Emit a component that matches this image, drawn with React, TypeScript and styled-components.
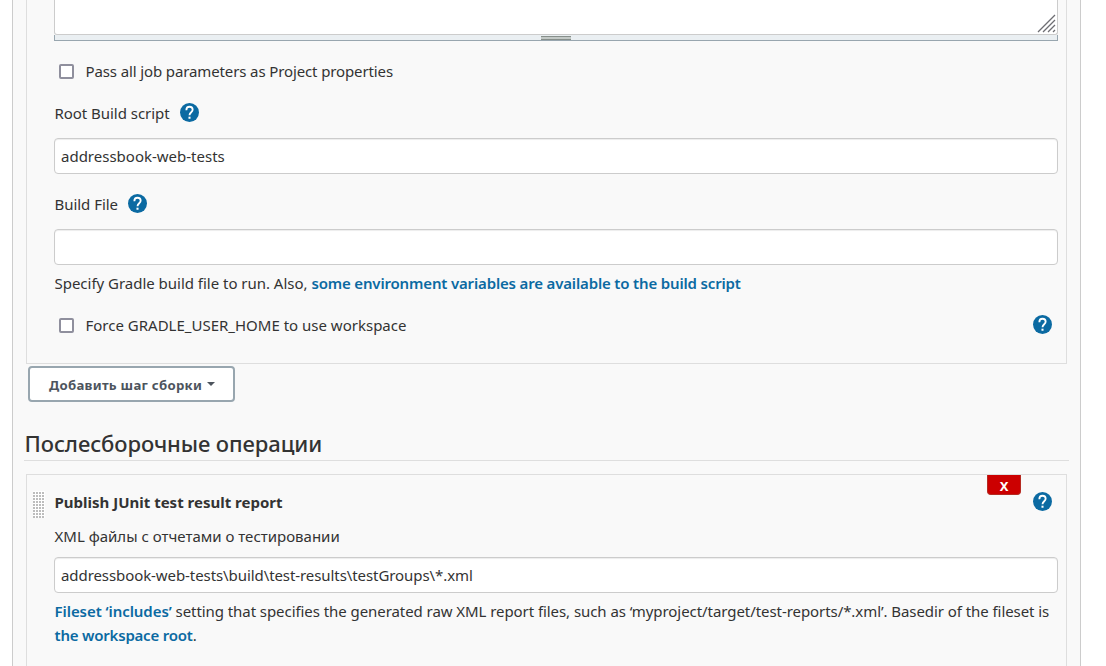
import React from "react";
import styled, { createGlobalStyle } from "styled-components";

const GlobalStyle = createGlobalStyle`
  *, *::before, *::after { box-sizing: border-box; }
  body {
    margin: 0;
    height: 666px;
    overflow: hidden;
    background: #fff;
    color: #333;
    font: 15px/24px "Noto Sans", "Open Sans", sans-serif;
  }
`;

const Page = styled.div`
  height: 666px;
  overflow: hidden;
  padding: 0 25px 0 12px;
`;

const Panel = styled.main`
  height: 666px;
  padding: 0 11px;
  background: #f9f9f9;
  border: solid #ccc;
  border-width: 0 1px;
`;

const Chunk = styled.section<{ $first?: boolean }>`
  position: relative;
  display: flex;
  flex-direction: column;
  margin: 0 2px;
  padding: 0 8px 0 27px;
  border: 1px solid #dedede;
  border-top-width: ${(p) => (p.$first ? 0 : 1)}px;
  border-bottom-width: ${(p) => (p.$first ? 1 : 0)}px;
  height: ${(p) => (p.$first ? "364px" : "192px")};
`;

const TextArea = styled.div`
  display: flex;
  align-items: flex-end;
  justify-content: flex-end;
  height: 35px;
  padding: 0 1px 1px;
  background: #fff;
  border: 1px solid #ccc;
  border-top: 0;
  border-radius: 0 0 3px 3px;
`;

const ResizeBar = styled.div`
  display: flex;
  justify-content: center;
  height: 6px;
  padding-top: 1px;
  background: #eaeff2;
  border: 1px solid #98a6af;
  border-top: 0;
`;

const ResizeGrip = styled.div`
  width: 30px;
  height: 4px;
  background: #c3c9c6;
  border: solid #878f8b;
  border-width: 1px 0;
`;

const Row = styled.div<{ $top: number; $indent?: number }>`
  display: flex;
  align-items: center;
  height: 24px;
  margin-top: ${(p) => p.$top}px;
  padding-left: ${(p) => p.$indent ?? 0.5}px;
`;

const Checkbox = styled.span`
  flex: none;
  width: 15px;
  height: 15px;
  margin-right: 11.5px;
  background: #fff;
  border: 2px solid #8f8f9d;
  border-radius: 2px;
`;

const Label = styled.span<{ $spacing?: number; $bold?: boolean }>`
  white-space: nowrap;
  letter-spacing: ${(p) => p.$spacing ?? 0}px;
  font-weight: ${(p) => (p.$bold ? 700 : 400)};
`;

const Input = styled.div<{ $top: number }>`
  display: flex;
  align-items: center;
  height: 36px;
  margin-top: ${(p) => p.$top}px;
  padding: 0 6px;
  background: #fff;
  border: 1px solid #ccc;
  border-radius: 4px;
  box-shadow: inset 0 1px 1px rgba(0, 0, 0, 0.075);
`;

const Link = styled.a<{ $spacing?: number }>`
  color: #0b6aa2;
  font-weight: 600;
  letter-spacing: ${(p) => p.$spacing ?? 0}px;
`;

const Description = styled.div<{ $top: number }>`
  margin-top: ${(p) => p.$top}px;
  padding-left: 0.5px;
  white-space: nowrap;
`;

const HelpSvg = styled.svg<{ $end?: boolean }>`
  flex: none;
  display: block;
  margin: 0 ${(p) => (p.$end ? "6px 1px auto" : "0 1px 10.5px")};
`;

const AddButton = styled.button`
  display: flex;
  align-items: center;
  width: 207px;
  height: 36px;
  margin: 2px 0 0 4px;
  padding: 2px 0 0 19px;
  color: #4d545d;
  background: #fff;
  border: 2px solid #98a6af;
  border-radius: 4px;
  font: 700 13.2px/18px "Noto Sans", sans-serif;
  letter-spacing: 0.27px;
  white-space: nowrap;
`;

const Caret = styled.span`
  margin: -3px 0 0 5px;
  border: 4px solid transparent;
  border-top-color: #4d545d;
  border-bottom: 0;
`;

const Heading = styled.h2`
  height: 38px;
  margin: 21px 0 13px;
  padding-left: 0.5px;
  border-bottom: 1px solid #dedede;
  font-size: 22px;
  line-height: 40px;
  font-weight: 500;
  letter-spacing: -0.09px;
  white-space: nowrap;
`;

const DragHandle = styled.span`
  position: absolute;
  left: 6px;
  top: 16px;
  width: 12px;
  height: 27px;
  background:
    conic-gradient(from 270deg at 2px 2px, #bdbdbd 90deg, transparent 0) 0 1px / 3px 3px,
    #fff;
`;

const DeleteButton = styled.button`
  position: absolute;
  right: 45px;
  top: 0;
  width: 34px;
  height: 20px;
  padding: 1px 0 0;
  color: #fff;
  background: #c00;
  border: 1px solid #b52b22;
  border-top: 0;
  border-radius: 0 0 4px 4px;
  font: 700 13px/20px "Noto Sans", sans-serif;
`;

const HelpIcon = ({ end }: { end?: boolean }) => (
  <HelpSvg $end={end} width="19" height="19" viewBox="0 0 24 24">
    <circle cx="12" cy="12" r="12" fill="#0b6aa2" />
    <path
      fill="none"
      stroke="#fff"
      strokeWidth="2.3"
      d="M8 9C8 6.5 9.7 4.7 12 4.7s4 1.7 4 3.9c0 3-4 3.3-4 6.9"
    />
    <rect x="10.7" y="17.3" width="2.6" height="2.6" fill="#fff" />
  </HelpSvg>
);

const ResizeCorner = () => (
  <svg width="19" height="19" viewBox="0 0 19 19">
    <path
      d="M1 18 18 1M6 18 18 6M11 18l7-7M16 18l2-2"
      stroke="#6e6e73"
      strokeWidth="1.3"
      fill="none"
    />
  </svg>
);

export default function App() {
  return (
    <Page>
      <GlobalStyle />
      <Panel>
        <Chunk $first>
          <TextArea>
            <ResizeCorner />
          </TextArea>
          <ResizeBar>
            <ResizeGrip />
          </ResizeBar>
          <Row $top={18} $indent={5}>
            <Checkbox />
            <Label $spacing={-0.12}>Pass all job parameters as Project properties</Label>
          </Row>
          <Row $top={18}>
            <Label $spacing={-0.04}>Root Build script</Label>
            <HelpIcon />
          </Row>
          <Input $top={13}>
            <Label>addressbook-web-tests</Label>
          </Input>
          <Row $top={18}>
            <Label $spacing={-0.04}>Build File</Label>
            <HelpIcon />
          </Row>
          <Input $top={13} />
          <Description $top={6}>
            <Label $spacing={-0.02}>Specify Gradle build file to run. Also, </Label>
            <Link $spacing={-0.16}>some environment variables are available to the build script</Link>
          </Description>
          <Row $top={18} $indent={5}>
            <Checkbox />
            <Label>Force GRADLE_USER_HOME to use workspace</Label>
            <HelpIcon end />
          </Row>
        </Chunk>
        <AddButton>
          Добавить шаг сборки
          <Caret />
        </AddButton>
        <Heading>Послесборочные операции</Heading>
        <Chunk>
          <DragHandle />
          <DeleteButton>X</DeleteButton>
          <Row $top={15}>
            <Label $bold>Publish JUnit test result report</Label>
            <HelpIcon end />
          </Row>
          <Row $top={10}>
            <Label>XML файлы с отчетами о тестировании</Label>
          </Row>
          <Input $top={9}>
            <Label $spacing={-0.08}>addressbook-web-tests\build\test-results\testGroups\*.xml</Label>
          </Input>
          <Description $top={6}>
            <Link $spacing={-0.06}>Fileset ‘includes’</Link>
            <Label $spacing={-0.065}>
              {" "}setting that specifies the generated raw XML report files, such as
              ‘myproject/target/test-reports/*.xml’. Basedir of the fileset is
            </Label>
            <br />
            <Link $spacing={-0.21}>the workspace root</Link>.
          </Description>
        </Chunk>
      </Panel>
    </Page>
  );
}
